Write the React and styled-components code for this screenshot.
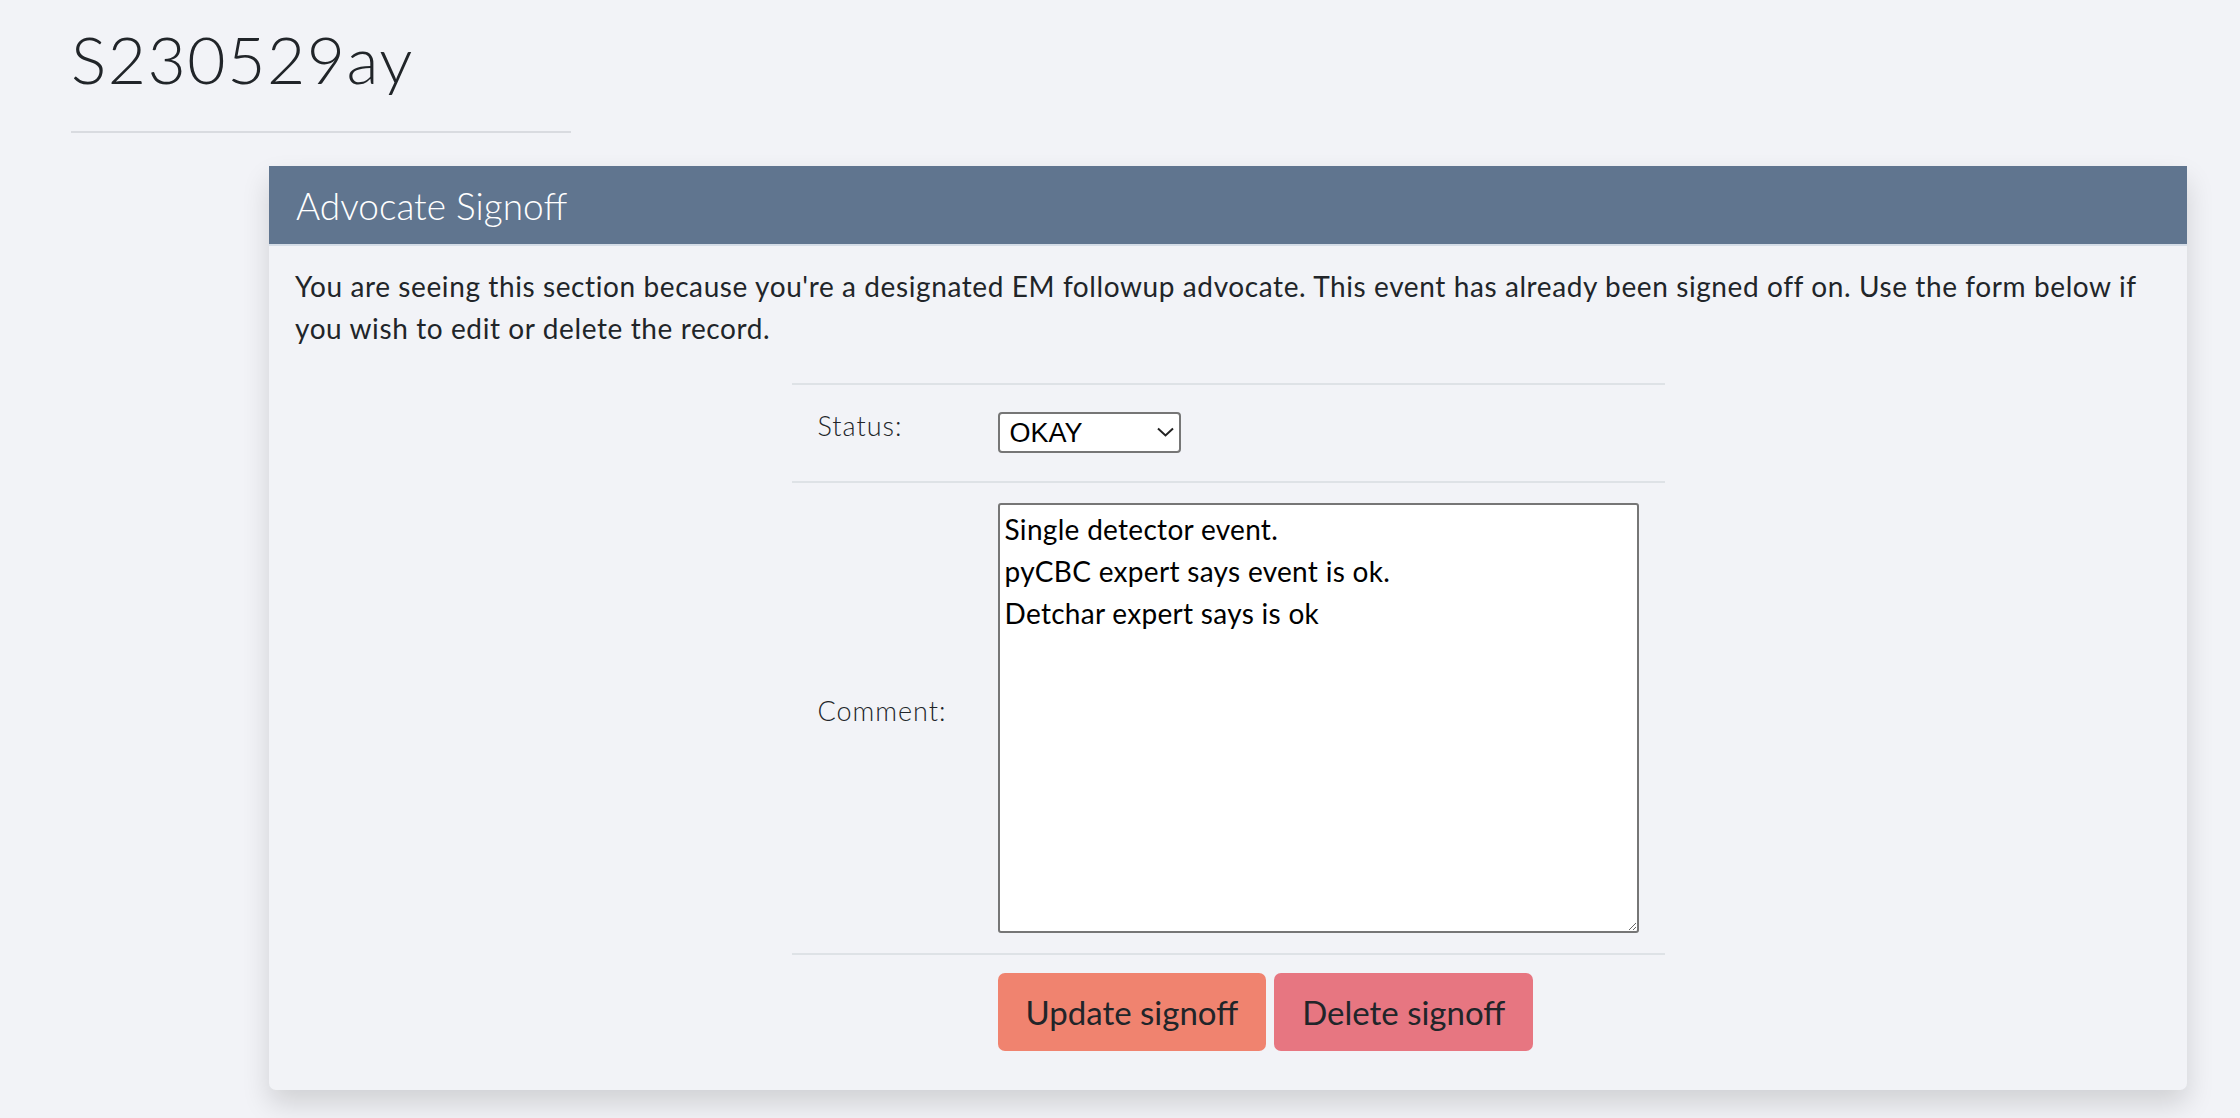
import React from "react";
import styled, { createGlobalStyle } from "styled-components";

const GlobalStyle = createGlobalStyle`
  * {
    box-sizing: border-box;
  }
  body {
    margin: 0;
    background: #f2f3f7;
    color: #212529;
    font-family: "Lato", "Open Sans", sans-serif;
  }
`;

const Chevron = () => (
  <svg width="17" height="10" viewBox="0 0 17 10" fill="none">
    <path d="M1 1.5l7.5 7 7.5-7" stroke="#222" strokeWidth="2" />
  </svg>
);

const App = () => {
  return (
    <Page>
      <GlobalStyle />
      <Title>S230529ay</Title>
      <Rule />
      <Card>
        <CardHeader>Advocate Signoff</CardHeader>
        <CardBody>
          <Intro>
            You are seeing this section because you're a designated EM followup
            advocate. This event has already been signed off on. Use the form
            below if you wish to edit or delete the record.
          </Intro>
          <FormTable>
            <tbody>
              <Row>
                <LabelCell>Status:</LabelCell>
                <ValueCell pad="27px 26px 28px">
                  <SelectWrap>
                    <Select defaultValue="OKAY">
                      <option>OKAY</option>
                      <option>NO</option>
                    </Select>
                    <ChevronBox>
                      <Chevron />
                    </ChevronBox>
                  </SelectWrap>
                </ValueCell>
              </Row>
              <Row>
                <LabelCell>Comment:</LabelCell>
                <ValueCell pad="20px 26px">
                  <Comment
                    defaultValue={
                      "Single detector event.\npyCBC expert says event is ok.\nDetchar expert says is ok"
                    }
                  />
                </ValueCell>
              </Row>
              <Row>
                <LabelCell />
                <ValueCell pad="18px 26px 23px">
                  <Buttons>
                    <Button tone="#f0836f">Update signoff</Button>
                    <Button tone="#e77681">Delete signoff</Button>
                  </Buttons>
                </ValueCell>
              </Row>
            </tbody>
          </FormTable>
        </CardBody>
      </Card>
    </Page>
  );
};

const Page = styled.div`
  min-height: 100vh;
  padding: 19px 53px 40px 71px;
`;

const Title = styled.h1`
  margin: 0;
  font-size: 66px;
  font-weight: 300;
  line-height: 1.2;
  letter-spacing: 1.5px;
  color: #212529;
`;

const Rule = styled.hr`
  width: 500px;
  margin: 33px 0 33px;
  border: 0;
  border-top: 2px solid #d9dbe0;
`;

const Card = styled.div`
  margin-left: 198px;
  background: #f2f3f7;
  border-radius: 0 0 7px 7px;
  box-shadow: 0 14px 28px rgba(0, 0, 0, 0.14);
`;

const CardHeader = styled.div`
  height: 80px;
  display: flex;
  align-items: center;
  padding: 0 27px;
  background: #60758f;
  border-bottom: 2px solid #d5dde7;
  color: #ffffff;
  font-size: 37px;
  font-weight: 300;
`;

const CardBody = styled.div`
  padding: 19px 26px 16px;
`;

const Intro = styled.p`
  margin: 0 0 34px;
  font-size: 28px;
  line-height: 42px;
  letter-spacing: 0.6px;
`;

const FormTable = styled.table`
  width: 873px;
  margin: 0 auto;
  border-collapse: collapse;
`;

const Row = styled.tr`
  border-top: 2px solid #dee2e6;
`;

const LabelCell = styled.td`
  width: 180px;
  padding: 0 0 14px 26px;
  vertical-align: middle;
  font-size: 27px;
  font-weight: 300;
  line-height: 1.5;
  letter-spacing: 1px;
  color: #212529;
`;

const ValueCell = styled.td`
  padding: ${(p) => p.pad};
  vertical-align: top;
`;

const SelectWrap = styled.div`
  position: relative;
  width: 183px;
  height: 41px;
`;

const Select = styled.select`
  appearance: none;
  display: block;
  width: 100%;
  height: 100%;
  padding: 0 0 0 10px;
  border: 2px solid #767676;
  border-radius: 4px;
  background: #ffffff;
  color: #000000;
  font-family: "Liberation Sans", Arial, sans-serif;
  font-size: 27px;
`;

const ChevronBox = styled.span`
  position: absolute;
  right: 7px;
  top: 15px;
  display: flex;
  pointer-events: none;
`;

const Comment = styled.textarea`
  display: block;
  width: 641px;
  height: 430px;
  margin: 0;
  padding: 3px 5px;
  border: 2px solid #767676;
  border-radius: 3px;
  background: #ffffff;
  color: #000000;
  font-family: "Lato", sans-serif;
  font-size: 28px;
  line-height: 42px;
  letter-spacing: 0.3px;
  resize: both;
`;

const Buttons = styled.div`
  display: flex;
  gap: 8px;
`;

const Button = styled.button`
  height: 78px;
  padding: 0 28px;
  border: 0;
  border-radius: 7px;
  background: ${(p) => p.tone};
  color: #212529;
  font-family: "Lato", sans-serif;
  font-size: 33px;
  cursor: pointer;
`;

export default App;
